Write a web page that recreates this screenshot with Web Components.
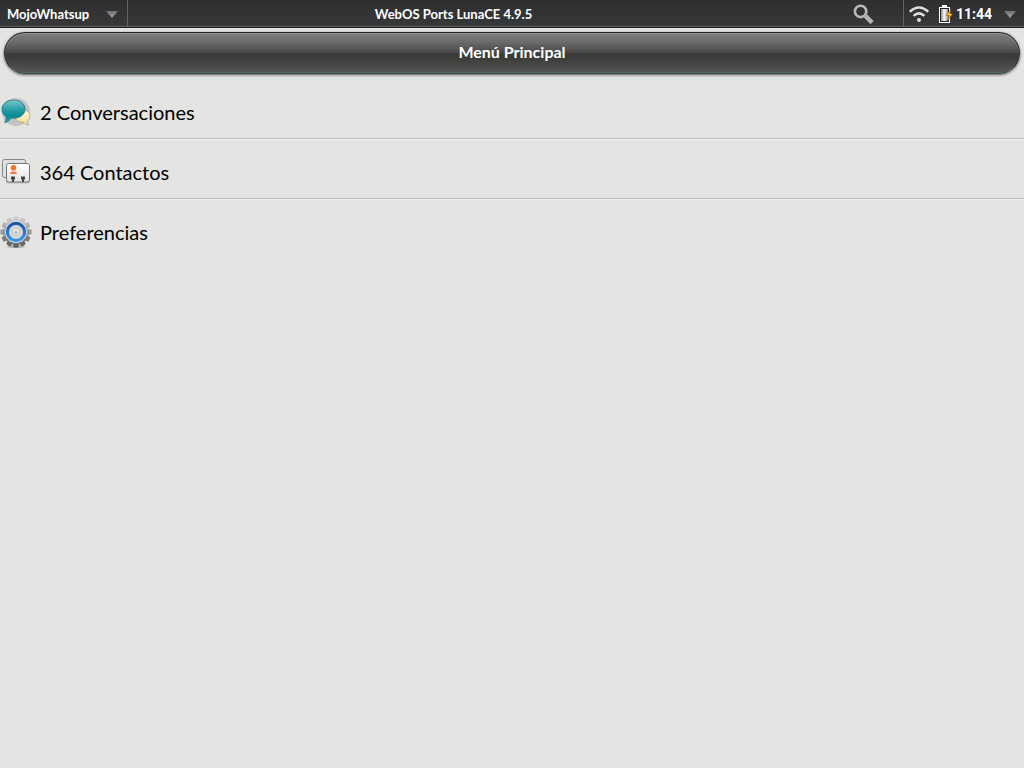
<!DOCTYPE html>
<html lang="es">
<head>
<meta charset="utf-8">
<meta name="viewport" content="width=device-width, initial-scale=1">
<title>MojoWhatsup</title>
<style>
  html, body { margin: 0; min-height: 100%; background: #e4e4e2; }
  body { font-family: Lato, "Open Sans", sans-serif; color: #000; }
</style>
</head>
<body>
<luna-status-bar>
  <span slot="app">MojoWhatsup</span>
  <span slot="title">WebOS Ports LunaCE 4.9.5</span>
  <time slot="clock" datetime="11:44">11:44</time>
</luna-status-bar>
<main>
  <mojo-header>Menú Principal</mojo-header>
  <mojo-list>
    <mojo-row href="#conversaciones"><icon-chat slot="icon"></icon-chat>2 Conversaciones</mojo-row>
    <mojo-row href="#contactos"><icon-contacts slot="icon"></icon-contacts>364 Contactos</mojo-row>
    <mojo-row href="#preferencias"><icon-gear slot="icon"></icon-gear>Preferencias</mojo-row>
  </mojo-list>
</main>
<script>
  const define = (name, html) => customElements.define(name, class extends HTMLElement {
    constructor() {
      super();
      this.attachShadow({ mode: 'open' }).innerHTML = html;
    }
  });

  define('luna-arrow', `
    <style>:host { display: block; } svg { display: block; }</style>
    <svg width="12" height="8" viewBox="0 0 12 8" aria-hidden="true">
      <defs><linearGradient id="g" x2="0" y2="1"><stop stop-color="#6e6e70"/><stop offset="1" stop-color="#a5a5a7"/></linearGradient></defs>
      <path d="M0 1H12L6 8Z" fill="url(#g)"/>
    </svg>`);

  define('luna-status-bar', `
    <style>
      :host {
        display: flex; height: 28px; box-sizing: border-box; color: #fff;
        font-size: 13px; font-weight: 700; line-height: 16px;
        background: linear-gradient(#2d2f31, #36383a);
        border-bottom: 1px solid #1a1b1d;
        box-shadow: inset 0 -1px #5c5d5f;
      }
      button {
        display: flex; align-items: center; margin: 0; border: 0; padding: 0 8px;
        background: none; color: inherit; font: inherit; white-space: nowrap;
        box-sizing: border-box;
      }
      .app { width: 128px; justify-content: space-between; padding: 0 9px 0 7px; border-right: 1px solid #626365; }
      .title { flex: 1; align-self: center; text-align: center; white-space: nowrap; }
      .search { width: 124px; justify-content: flex-end; padding-right: 29px; }
      .system { width: 121px; border-left: 1px solid #626365; padding-left: 4px; }
      .battery { margin-left: 8px; }
      .clock { margin-left: 3px; font: 700 14px/16px Roboto, sans-serif; }
      .system luna-arrow { margin-left: auto; }
      svg { display: block; }
    </style>
    <button class="app" type="button"><slot name="app"></slot><luna-arrow></luna-arrow></button>
    <div class="title"><slot name="title"></slot></div>
    <button class="search" type="button" aria-label="Buscar">
      <svg width="22" height="22" viewBox="0 0 22 22">
        <circle cx="8.600" cy="8.400" r="5.700" fill="none" stroke="#b9b9ba" stroke-width="2.600"/>
        <path d="M12.800 12.300L14.500 14" stroke="#a0a0a2" stroke-width="2.500"/>
        <path d="M15 14.500L18.500 18" stroke="#b4b4b6" stroke-width="4.500" stroke-linecap="square"/>
      </svg>
    </button>
    <button class="system" type="button">
      <svg width="22" height="18" viewBox="0 0 22 18" fill="none" stroke="#dededf" stroke-width="2.600" aria-hidden="true">
        <path d="M1.800 6.700Q11-1.700 20.200 6.700M5.600 10.900Q11 6 16.400 10.900"/>
        <circle cx="11" cy="15" r="2" fill="#dededf" stroke="none"/>
      </svg>
      <svg class="battery" width="15" height="20" viewBox="0 0 15 20" aria-hidden="true">
        <defs><linearGradient id="b"><stop stop-color="#8a8a8a"/><stop offset=".45" stop-color="#fafafa"/><stop offset="1" stop-color="#999"/></linearGradient></defs>
        <path d="M4 1H9V3H12V19H1V3H4Z" fill="#fff"/>
        <rect x="2" y="4" width="9" height="14" fill="#242426"/>
        <rect x="3" y="5" width="7" height="12" fill="url(#b)"/>
        <path d="M13 5L8 11.500H10.800L9.500 17L14.700 9.500H12Z" fill="#ffb822" stroke="#5a3a08" stroke-width=".4"/>
      </svg>
      <span class="clock"><slot name="clock"></slot></span>
      <luna-arrow></luna-arrow>
    </button>`);

  define('mojo-header', `
    <style>
      :host { display: block; margin: 4px 4px 5px; }
      h1 {
        margin: 0; height: 42px; box-sizing: border-box; border-radius: 21px;
        border: 1px solid #222423; border-bottom-color: #344444; text-align: center;
        color: #fff; font-size: 16px; font-weight: 700; line-height: 38px;
        background: linear-gradient(#7d7d7c, #6e6e6e 20%, #484847 49%, #393937 52%, #3b3b39 62%, #555554);
        box-shadow: inset 0 1px #949494, inset 0 -1px #576866, 0 1px 3px #555;
      }
    </style>
    <h1><slot></slot></h1>`);

  define('mojo-list', `
    <style>
      :host { display: block; }
      ::slotted(:not(:last-child)) { border-bottom: 1px solid #b9b9b7; box-shadow: 0 1px #f2f2f0; }
    </style>
    <slot></slot>`);

  customElements.define('mojo-row', class extends HTMLElement {
    constructor() {
      super();
      this.attachShadow({ mode: 'open' }).innerHTML = `
        <style>
          :host { display: block; height: 60px; box-sizing: border-box; }
          a {
            display: flex; align-items: center; gap: 8px; height: 100%; padding-top: 6px;
            box-sizing: border-box; color: #000; text-decoration: none;
            font-size: 20px; line-height: 24px;
          }
        </style>
        <a><slot name="icon"></slot><span><slot></slot></span></a>`;
    }
    connectedCallback() {
      this.shadowRoot.querySelector('a').href = this.getAttribute('href');
    }
  });

  const icon = (name, body) => define(name, `
    <style>:host { display: block; flex: none; } svg { display: block; }</style>
    <svg width="32" height="32" viewBox="0 0 32 32" aria-hidden="true">${body}</svg>`);

  icon('icon-chat', `
    <defs>
      <linearGradient id="t" x2="0" y2="1"><stop stop-color="#7cc7cc"/><stop offset=".45" stop-color="#239ca5"/><stop offset=".7" stop-color="#088a94"/><stop offset="1" stop-color="#2ba6ad"/></linearGradient>
      <linearGradient id="y" x2="0" y2="1"><stop stop-color="#fffbe0"/><stop offset="1" stop-color="#ecdc96"/></linearGradient>
    </defs>
    <circle cx="16" cy="16" r="14" fill="#c3c3c3"/>
    <path d="M22 14C27 14 30 16.500 30 20C30 22.300 29 23.900 27.300 25C27.400 26.500 28 28 28.700 29C26.500 28.900 24.600 27.800 23.500 26.300C18.500 26.500 15 24 15 20.500Z" fill="url(#y)" stroke="#a59b6b" stroke-width=".7"/>
    <path d="M13.500 4C20 4 25 7.800 25 13C25 18.500 20.500 22 13.500 22.300L11 22.100C9.500 24.600 7.300 26.300 4.600 26.600C5.800 25 6.300 22.800 6.200 20.700C3.500 19 2 16.400 2 13C2 7.800 7 4 13.500 4Z" fill="url(#t)" stroke="#17757c" stroke-width=".8"/>`);

  icon('icon-contacts', `
    <defs><linearGradient id="c" x2="0" y2="1"><stop stop-color="#fff"/><stop offset="1" stop-color="#e2e2e4"/></linearGradient></defs>
    <rect x="2.500" y="3.500" width="23" height="18" rx="2" fill="#dfdfe0" stroke="#858587"/>
    <rect x="6" y="9" width="24" height="18.500" rx="2" fill="#999" opacity=".5"/>
    <rect x="6.500" y="7.500" width="23" height="18.500" rx="2" fill="url(#c)" stroke="#77777a"/>
    <circle cx="13.500" cy="11.800" r="2.800" fill="#f57622"/>
    <path d="M9.800 18Q10 15.500 12.500 15.500H14.500Q17 15.500 17.200 18Z" fill="#f4794a"/>
    <path d="M11 20.500H15V23.500H14V26H12V23.500H11ZM21 20.500H25V23.500H24V26H22V23.500H21Z" fill="#434346"/>`);

  const teeth = Array.from({ length: 12 }, (_, i) => {
    const shade = Math.round(150 + 55 * Math.cos(i * Math.PI / 6));
    return `<path d="M12.800 5L13.800 0.500H18.200L19.200 5Z" fill="rgb(${shade},${shade},${shade})" transform="rotate(${i * 30} 16 16)"/>`;
  }).join('');
  icon('icon-gear', `
    <defs>
      <linearGradient id="m" gradientUnits="userSpaceOnUse" x1="0" y1="1" x2="0" y2="31"><stop stop-color="#dcdcdc"/><stop offset=".5" stop-color="#999"/><stop offset="1" stop-color="#6a6a6a"/></linearGradient>
      <linearGradient id="u" gradientUnits="userSpaceOnUse" x1="0" y1="6" x2="0" y2="26"><stop stop-color="#164e9c"/><stop offset="1" stop-color="#369bf5"/></linearGradient>
      <radialGradient id="w"><stop stop-color="#fff"/><stop offset="1" stop-color="#c7cacd"/></radialGradient>
    </defs>
    <ellipse cx="16" cy="30.500" rx="9" ry="1.500" fill="#aaa"/>
    ${teeth}
    <circle cx="16" cy="16" r="12.500" fill="url(#m)"/>
    <circle cx="16" cy="16" r="10.800" fill="#e9edf0"/>
    <circle cx="16" cy="16" r="8.500" fill="none" stroke="url(#u)" stroke-width="3.400"/>
    <circle cx="16" cy="16" r="7" fill="url(#w)"/>
    <circle cx="16" cy="16" r="3.600" fill="#eee" stroke="#bbb"/>
    <circle cx="16" cy="16.500" r="1.500" fill="#b2b2b2"/>`);
</script>
</body>
</html>
